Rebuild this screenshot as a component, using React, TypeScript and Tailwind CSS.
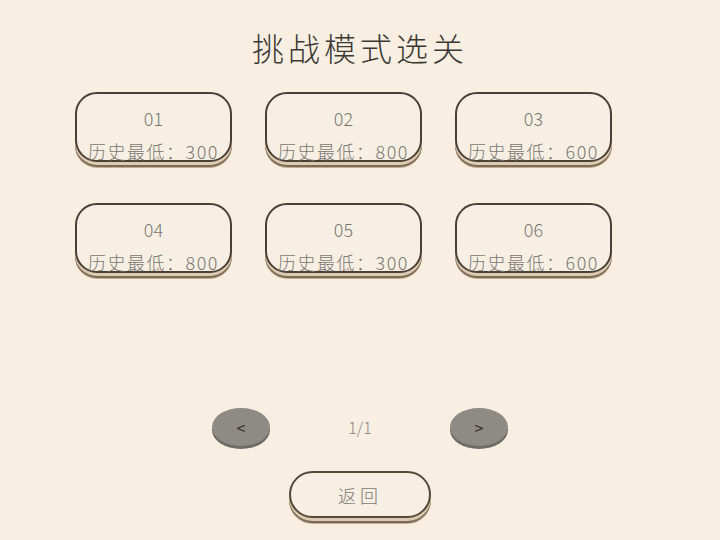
const levels = [
  { id: "01", best: 300 },
  { id: "02", best: 800 },
  { id: "03", best: 600 },
  { id: "04", best: 800 },
  { id: "05", best: 300 },
  { id: "06", best: 600 },
];

const font = { fontFamily: '"Noto Sans CJK SC", "Noto Sans", sans-serif' };

function LevelCard({ id, best }: { id: string; best: number }) {
  return (
    <button
      type="button"
      className="flex h-[70px] w-[157px] flex-col items-center rounded-[22px] border-2 border-[#4a4036] bg-[#f7efe4] pt-[12px] text-[#7b7770] shadow-[0_3px_0_#dccbb2,0_5px_0_#7d6a55,0_6px_0_#c2ad92]"
    >
      <span className="text-[18px] leading-[24px] font-light">{id}</span>
      <span className="mt-[10px] text-[18px] leading-[22px] font-light tracking-[1.5px]">
        历史最低：{best}
      </span>
    </button>
  );
}

function RoundButton({ label }: { label: string }) {
  return (
    <button
      type="button"
      className="flex h-[38px] w-[58px] items-center justify-center rounded-[50%] bg-[#8e8b84] text-[16px] font-normal text-[#34322f] shadow-[0_3px_0_#6f6c66]"
    >
      {label}
    </button>
  );
}

export default function App() {
  return (
    <main
      className="flex min-h-[540px] w-full flex-col items-center bg-[#f8efe2] pt-[31px]"
      style={font}
    >
      <h1 className="text-[32px] leading-[32px] font-light tracking-[4px] text-[#3b3834]">
        挑战模式选关
      </h1>

      <div className="mt-[29px] ml-[75px] grid grid-cols-3 gap-x-[33px] gap-y-[41px] self-start">
        {levels.map((l) => (
          <LevelCard key={l.id} id={l.id} best={l.best} />
        ))}
      </div>

      <div className="mt-[135px] flex items-center gap-[60px]">
        <RoundButton label="<" />
        <span className="w-[60px] text-center text-[16px] font-light text-[#8a8680]">1/1</span>
        <RoundButton label=">" />
      </div>

      <button
        type="button"
        className="mt-[25px] flex h-[47px] w-[142px] items-center justify-center rounded-full border-2 border-[#544839] bg-[#f7efe4] pt-[2px] text-[18px] font-light tracking-[4px] text-[#7b7770] shadow-[0_3px_0_#dccbb2,0_5px_0_#7d6a55,0_6px_0_#c2ad92]"
      >
        返回
      </button>
    </main>
  );
}
